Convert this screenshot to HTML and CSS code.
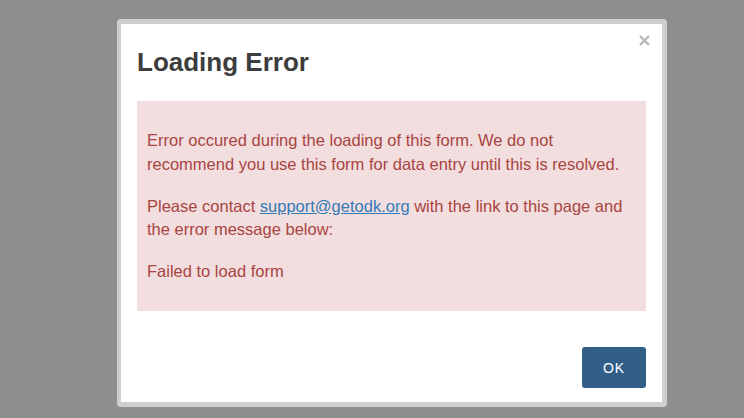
FILE: index.html
```html
<!DOCTYPE html>
<html lang="en">

<head>
    <meta charset="UTF-8">
    <meta name="viewport" content="width=device-width, initial-scale=1.0">
    <title>Loading Error</title>
    <link rel="stylesheet" href="styles.css">
</head>

<body>
    <div class="modal">
        <div class="modal-header">
            <h3 class="modal-title">Loading Error</h3>
            <button class="close" aria-label="Close">
                <svg width="11" height="11" viewBox="0 0 11 11">
                    <path d="M1 1 L10 10 M10 1 L1 10" stroke="#b5b5b5" stroke-width="2.2" fill="none"/>
                </svg>
            </button>
        </div>

        <div class="modal-body">
            <div class="alert">
                <p>Error occured during the loading of this form. We do not recommend you use this form for data entry until this is resolved.</p>
                <p>Please contact <a href="#">support@getodk.org</a> with the link to this page and the error message below:</p>
                <p>Failed to load form</p>
            </div>
        </div>

        <div class="modal-footer">
            <button class="btn-ok">OK</button>
        </div>
    </div>
</body>

</html>
```

FILE: styles.css
```css
* {
    margin: 0;
    padding: 0;
    box-sizing: border-box;
}

body {
    font-family: "Liberation Sans", Arial, sans-serif;
    background-color: #8f8f8f;
    width: 744px;
    height: 418px;
    overflow: hidden;
}

.modal {
    margin: 19px 0 0 117px;
    width: 550px;
    height: 388px;
    background-color: #fff;
    border: 5px solid #cfcfcf;
    border-left-width: 4px;
    border-radius: 4px;
    display: flex;
    flex-direction: column;
}

.modal-header {
    display: flex;
    justify-content: space-between;
    align-items: flex-start;
    padding: 11px 12px 0 16px;
}

.modal-title {
    margin-top: 13px;
    font-size: 26px;
    line-height: 28px;
    font-weight: bold;
    color: #3d3d3d;
}

.close {
    border: none;
    background: none;
    width: 11px;
    height: 12px;
    display: flex;
    cursor: pointer;
}

.modal-body {
    padding: 25px 16px 0 16px;
}

.alert {
    background-color: #f2dede;
    color: #a94442;
    padding: 28px 10px 27px 10px;
    font-size: 16.5px;
    line-height: 23.6px;
}

.alert p + p {
    margin-top: 18.5px;
}

.alert a {
    color: #337ab7;
    text-decoration: underline;
}

.modal-footer {
    margin-top: auto;
    display: flex;
    justify-content: flex-end;
    padding: 0 16px 14px 16px;
}

.btn-ok {
    width: 64px;
    height: 41px;
    border: none;
    border-radius: 3px;
    background-color: #315f87;
    color: #fff;
    font-family: "Liberation Sans", Arial, sans-serif;
    font-size: 14px;
    letter-spacing: 1px;
    cursor: pointer;
}
```
